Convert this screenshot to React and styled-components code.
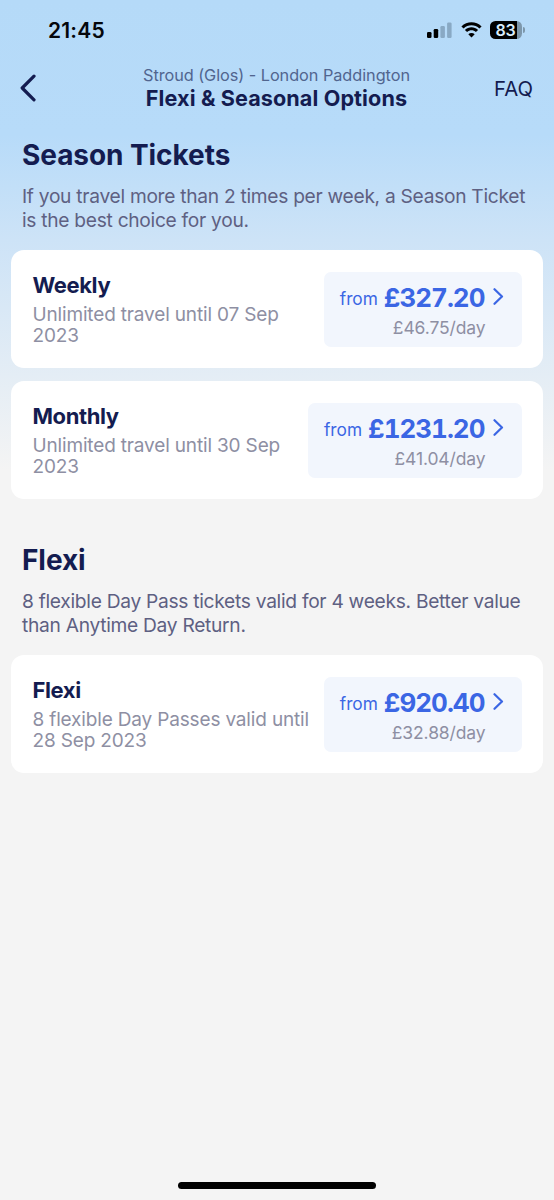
import React from "react";
import styled, { createGlobalStyle } from "styled-components";

const colors = {
  navy: "#141c50",
  blue: "#3b66e4",
  slate: "#5e6082",
  grey: "#8e8fa3",
  tint: "#f2f6fd",
};

const GlobalStyle = createGlobalStyle`
  *, *::before, *::after { box-sizing: border-box; }
  html, body { margin: 0; padding: 0; background: #f4f4f4; }
  body { font-family: Inter, "Liberation Sans", sans-serif; }
  h1, h2, h3, p { margin: 0; }
`;

const Screen = styled.div`
  display: flex;
  flex-direction: column;
  width: 554px;
  height: 1200px;
  overflow: hidden;
  white-space: nowrap;
  background: linear-gradient(180deg, #b5daf8 0, #b7dbf9 135px, #cde3f7 240px, #e4edf5 375px, #f4f4f4 470px);
`;

const StatusBar = styled.div`
  display: flex;
  align-items: center;
  justify-content: space-between;
  height: 60px;
  padding: 0 32px 0 48px;
`;

const Time = styled.span`
  margin-top: 1px;
  color: #05070c;
  font-size: 21px;
  font-weight: 600;
  line-height: 26px;
  letter-spacing: 0.2px;
`;

const StatusIcons = styled.div`
  display: flex;
  align-items: center;
`;

const Battery = styled.div`
  display: flex;
  align-items: center;
  justify-content: center;
  width: 32px;
  height: 18px;
  margin-left: 8px;
  padding-right: 1px;
  border-radius: 5.5px;
  background: linear-gradient(90deg, #000 27px, #7d97ab 27px);
  color: #d9edfc;
  font-size: 16px;
  font-weight: 600;
  line-height: 18px;
  letter-spacing: -0.3px;
`;

const BatteryCap = styled.span`
  width: 2px;
  height: 6px;
  margin-left: 1px;
  margin-right: -3px;
  border-radius: 0 2px 2px 0;
  background: #7d97ab;
`;

const NavBar = styled.header`
  display: grid;
  grid-template-columns: 80px 1fr 80px;
  align-items: center;
  height: 56px;
  padding: 0 21px 0 20px;
`;

const BackButton = styled.button`
  display: flex;
  padding: 0;
  border: 0;
  background: none;
`;

const Heading = styled.div`
  display: flex;
  flex-direction: column;
  align-items: center;
`;

const Route = styled.p`
  color: #51658f;
  font-size: 16.3px;
  line-height: 20px;
  letter-spacing: -0.05px;
`;

const PageTitle = styled.h1`
  color: ${colors.navy};
  font-size: 21.6px;
  font-weight: 700;
  line-height: 27px;
  letter-spacing: 0.1px;
`;

const FaqLink = styled.span`
  justify-self: end;
  padding-top: 2px;
  color: ${colors.navy};
  font-size: 20.3px;
  line-height: 24px;
`;

const Section = styled.section`
  display: flex;
  flex-direction: column;
  padding: 0 11px;
  margin-top: ${(p) => p.$top}px;
`;

const SectionTitle = styled.h2`
  padding-left: 11px;
  color: ${colors.navy};
  font-size: 28px;
  font-weight: 700;
  line-height: 34px;
  letter-spacing: -0.07px;
`;

const SectionText = styled.p`
  margin: 12px 0 18px;
  padding-left: 11px;
  color: ${colors.slate};
  font-size: 19.2px;
  line-height: 24px;
  letter-spacing: -0.29px;
`;

const CardList = styled.div`
  display: flex;
  flex-direction: column;
  gap: 13px;
`;

const Card = styled.article`
  display: flex;
  justify-content: space-between;
  height: 118px;
  padding: 21.5px;
  border-radius: 13px;
  background: #fff;
`;

const TicketInfo = styled.div`
  display: flex;
  flex-direction: column;
`;

const TicketName = styled.h3`
  margin-bottom: 5px;
  color: ${colors.navy};
  font-size: 22px;
  font-weight: 700;
  line-height: 27px;
  letter-spacing: -0.4px;
`;

const TicketText = styled.p`
  color: ${colors.grey};
  font-size: 19px;
  line-height: 21.5px;
  letter-spacing: -0.16px;
`;

const PriceBox = styled.div`
  display: flex;
  justify-content: flex-end;
  width: ${(p) => (p.$wide ? 214 : 198)}px;
  height: 75px;
  padding: 10px 18px 0 0;
  border-radius: 7px;
  background: ${colors.tint};
`;

const Amounts = styled.div`
  display: flex;
  flex-direction: column;
  align-items: flex-end;
  margin-right: 7px;
`;

const PriceLine = styled.div`
  display: flex;
  gap: 6px;
  height: 35px;
  color: ${colors.blue};
`;

const From = styled.span`
  font-size: 17.3px;
  line-height: 34px;
`;

const Price = styled.span`
  font-size: 26px;
  font-weight: 700;
  font-variant-numeric: tabular-nums;
  line-height: 32px;
  letter-spacing: -1px;
  margin-right: 1px;
`;

const PerDay = styled.span`
  color: ${colors.grey};
  font-size: 17.5px;
  line-height: 22px;
  letter-spacing: -0.12px;
`;

const Arrow = styled.svg`
  display: block;
  margin-top: 5px;
`;

const HomeIndicator = styled.div`
  width: 198px;
  height: 7px;
  margin: auto auto 11px;
  border-radius: 4px;
  background: #000;
`;

const WifiIcon = styled.svg`
  margin-left: 9px;
`;

const seasonTickets = [
  { name: "Weekly", lines: ["Unlimited travel until 07 Sep", "2023"], price: "£327.20", perDay: "£46.75/day" },
  { name: "Monthly", lines: ["Unlimited travel until 30 Sep", "2023"], price: "£1231.20", perDay: "£41.04/day", wide: true },
];

const flexiTickets = [
  { name: "Flexi", lines: ["8 flexible Day Passes valid until", "28 Sep 2023"], price: "£920.40", perDay: "£32.88/day" },
];

function Lines({ items }) {
  return items.map((line, i) => (
    <React.Fragment key={line}>
      {i > 0 && <br />}
      {line}
    </React.Fragment>
  ));
}

function Ticket({ name, lines, price, perDay, wide }) {
  return (
    <Card>
      <TicketInfo>
        <TicketName>{name}</TicketName>
        <TicketText><Lines items={lines} /></TicketText>
      </TicketInfo>
      <PriceBox $wide={wide}>
        <Amounts>
          <PriceLine>
            <From>from</From>
            <Price>{price}</Price>
          </PriceLine>
          <PerDay>{perDay}</PerDay>
        </Amounts>
        <Arrow width="11" height="19" viewBox="0 0 11 19" fill="none">
          <path d="M1.5 2.2L9 9.5L1.5 16.8" stroke={colors.blue} strokeWidth="2.2" strokeLinecap="round" strokeLinejoin="round" />
        </Arrow>
      </PriceBox>
    </Card>
  );
}

function TicketSection({ title, lines, tickets, top }) {
  return (
    <Section $top={top}>
      <SectionTitle>{title}</SectionTitle>
      <SectionText><Lines items={lines} /></SectionText>
      <CardList>
        {tickets.map((t) => <Ticket key={t.name} {...t} />)}
      </CardList>
    </Section>
  );
}

export default function App() {
  return (
    <Screen>
      <GlobalStyle />
      <StatusBar>
        <Time>21:45</Time>
        <StatusIcons>
          <svg width="25" height="16" viewBox="0 0 25 16">
            <rect x="0" y="10" width="4.5" height="6" rx="1.3" fill="#000" />
            <rect x="6.7" y="7" width="4.5" height="9" rx="1.3" fill="#000" />
            <rect x="13.4" y="4" width="4.5" height="12" rx="1.3" fill="#89a9c4" />
            <rect x="20.1" y="0.5" width="4.5" height="15.5" rx="1.3" fill="#89a9c4" />
          </svg>
          <WifiIcon width="21" height="16" viewBox="0 0 21 16">
            <path d="M0.4 4.4C6-1.2 15-1.2 20.6 4.4L18.4 6.6C14 2.2 7 2.2 2.6 6.6Z" fill="#000" />
            <path d="M3.9 7.9C7.6 4.3 13.4 4.3 17.1 7.9L14.9 10.1C12.4 7.7 8.6 7.7 6.1 10.1Z" fill="#000" />
            <path d="M10.5 15.4L7.3 12.2C9.1 10.6 11.9 10.6 13.7 12.2Z" fill="#000" />
          </WifiIcon>
          <Battery>83</Battery>
          <BatteryCap />
        </StatusIcons>
      </StatusBar>
      <NavBar>
        <BackButton aria-label="Back">
          <svg width="17" height="28" viewBox="0 0 17 28" fill="none">
            <path d="M14 2.2L2.2 14L14 25.8" stroke={colors.navy} strokeWidth="3.2" strokeLinecap="round" strokeLinejoin="round" />
          </svg>
        </BackButton>
        <Heading>
          <Route>Stroud (Glos) - London Paddington</Route>
          <PageTitle>Flexi &amp; Seasonal Options</PageTitle>
        </Heading>
        <FaqLink>FAQ</FaqLink>
      </NavBar>
      <TicketSection
        top={22}
        title="Season Tickets"
        lines={["If you travel more than 2 times per week, a Season Ticket", "is the best choice for you."]}
        tickets={seasonTickets}
      />
      <TicketSection
        top={44}
        title="Flexi"
        lines={["8 flexible Day Pass tickets valid for 4 weeks. Better value", "than Anytime Day Return."]}
        tickets={flexiTickets}
      />
      <HomeIndicator />
    </Screen>
  );
}
